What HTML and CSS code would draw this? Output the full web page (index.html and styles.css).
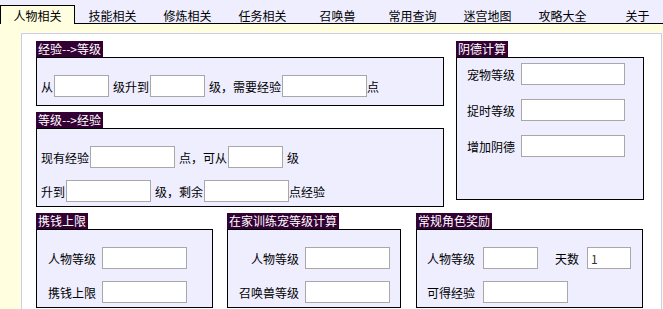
FILE: index.html
```html
<!DOCTYPE html>
<html lang="zh-CN">
<head>
    <meta charset="UTF-8">
    <title>人物相关</title>
    <link rel="stylesheet" href="styles.css">
</head>
<body>
<!-- Tab bar -->
<div class="tabs">
    <div class="tab active">人物相关</div>
    <div class="tab">技能相关</div>
    <div class="tab">修炼相关</div>
    <div class="tab">任务相关</div>
    <div class="tab">召唤兽</div>
    <div class="tab">常用查询</div>
    <div class="tab">迷宫地图</div>
    <div class="tab">攻略大全</div>
    <div class="tab">关于</div>
</div>

<div class="content">
    <div class="panel">
        <div class="top">
            <div class="col-left">
                <!-- Experience to level -->
                <div class="section">
                    <div class="caption">经验--&gt;等级</div>
                    <div class="box box-one">
                        <div class="row">
                            <span>从</span><input type="text" class="in-s">
                            <span>级升到</span><input type="text" class="in-s">
                            <span>级，需要经验</span><input type="text" class="in-m tight">
                            <span>点</span>
                        </div>
                    </div>
                </div>

                <!-- Level to experience -->
                <div class="section">
                    <div class="caption">等级--&gt;经验</div>
                    <div class="box box-two">
                        <div class="row">
                            <span>现有经验</span><input type="text" class="in-m">
                            <span>点，可从</span><input type="text" class="in-s">
                            <span>级</span>
                        </div>
                        <div class="row">
                            <span>升到</span><input type="text" class="in-m">
                            <span>级，剩余</span><input type="text" class="in-m tight">
                            <span>点经验</span>
                        </div>
                    </div>
                </div>
            </div>

            <div class="col-right">
                <!-- Yin de -->
                <div class="section">
                    <div class="caption">阴德计算</div>
                    <div class="box box-yinde">
                        <div class="row"><span class="label">宠物等级</span><input type="text" class="in-l"></div>
                        <div class="row"><span class="label">捉时等级</span><input type="text" class="in-l"></div>
                        <div class="row"><span class="label">增加阴德</span><input type="text" class="in-l"></div>
                    </div>
                </div>
            </div>
        </div>

        <div class="bottom">
            <div class="section sec-money">
                <div class="caption">携钱上限</div>
                <div class="box box-low">
                    <div class="row"><span class="label w48">人物等级</span><input type="text" class="in-m"></div>
                    <div class="row"><span class="label w48">携钱上限</span><input type="text" class="in-m"></div>
                </div>
            </div>

            <div class="section sec-train">
                <div class="caption">在家训练宠等级计算</div>
                <div class="box box-low">
                    <div class="row"><span class="label w60">人物等级</span><input type="text" class="in-m"></div>
                    <div class="row"><span class="label w60">召唤兽等级</span><input type="text" class="in-m"></div>
                </div>
            </div>

            <div class="section sec-reward">
                <div class="caption">常规角色奖励</div>
                <div class="box box-low box-reward">
                    <div class="row">
                        <span class="label">人物等级</span><input type="text" class="in-s">
                        <span class="label days">天数</span><input type="text" class="in-xs" value="1">
                    </div>
                    <div class="row"><span class="label">可得经验</span><input type="text" class="in-m"></div>
                </div>
            </div>
        </div>
    </div>
</div>
</body>
</html>
```

FILE: styles.css
```css
body {
    margin: 0;
    font-family: "Noto Sans CJK SC", "Liberation Sans", sans-serif;
    font-size: 12px;
    color: #000;
    background-color: #ffffe0;
}

/* tabs */
.tabs {
    display: flex;
    height: 24px;
    background-color: #eeeeff;
    overflow: hidden;
}

.tab {
    flex: 0 0 75px;
    box-sizing: border-box;
    height: 19px;
    margin-top: 5px;
    padding-top: 5px;
    line-height: 12px;
    text-align: center;
    border-bottom: 1px solid #000;
}

.tab.active {
    background-color: #ffffe0;
    border: 1px solid #000;
    border-bottom: none;
    padding-top: 4px;
}

/* content */
.content {
    padding: 9px 0 0 21px;
}

.panel {
    box-sizing: border-box;
    width: 641px;
    background-color: #fff;
    border: 1px solid #ccccee;
    padding: 7px 17px 20px 14px;
}

.top {
    display: flex;
    gap: 12px;
}

.col-left {
    width: 408px;
}

.col-right {
    width: 188px;
}

.section + .section {
    margin-top: 6px;
}

.caption {
    width: fit-content;
    height: 16px;
    line-height: 16px;
    padding: 0 2px;
    background-color: #330033;
    color: #fff;
}

.box {
    border: 1px solid #000;
    background-color: #eeeeff;
}

.row {
    display: flex;
    align-items: center;
    height: 22px;
    white-space: nowrap;
}

input[type="text"] {
    box-sizing: border-box;
    height: 22px;
    margin: 0 4px 0 1px;
    padding: 0 3px;
    border: 1px solid #a8a8a8;
    background-color: #fff;
    font-family: "Noto Sans CJK SC", "Liberation Sans", sans-serif;
    font-size: 12px;
    color: #333;
}

input.tight {
    margin-right: 0;
}

.in-xs { width: 44px; }
.in-s { width: 55px; }
.in-m { width: 85px; }
.in-l { width: 104px; }

.box-one {
    padding: 17px 4px 8px;
}

.box-two {
    display: flex;
    flex-direction: column;
    gap: 12px;
    padding: 17px 4px 4px;
}

.box-yinde {
    box-sizing: border-box;
    height: 143px;
    display: flex;
    flex-direction: column;
    gap: 14px;
    padding: 5px 0 0 10px;
}

.box-yinde .label {
    margin-right: 5px;
}

/* bottom row */
.bottom {
    display: flex;
    margin-top: 6px;
}

.bottom .section + .section {
    margin-top: 0;
}

.sec-money { width: 177px; }
.sec-train { width: 174px; margin-left: 14px; }
.sec-reward { width: 227px; margin-left: 15px; }

.box-low {
    display: flex;
    flex-direction: column;
    gap: 12px;
    padding: 17px 0 4px 11px;
}

.label {
    display: inline-block;
    margin-right: 5px;
}

.w48 { width: 48px; }
.w60 { width: 60px; text-align: right; }

.box-reward {
    padding-left: 10px;
}

.box-reward .label {
    margin-right: 7px;
}

.box-reward .label.days {
    margin-left: 13px;
}
```
